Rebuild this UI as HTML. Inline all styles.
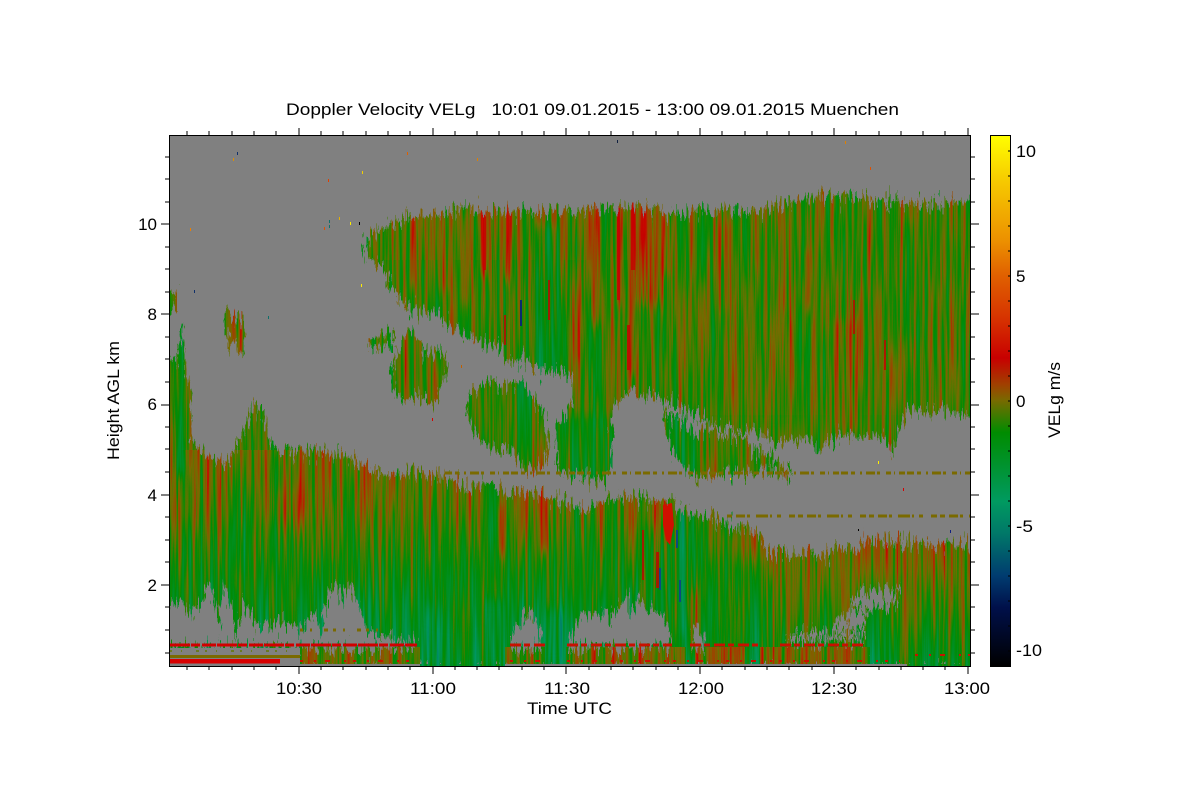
<!DOCTYPE html>
<html><head><meta charset="utf-8"><title>Doppler Velocity</title>
<style>html,body{margin:0;padding:0;background:#fff}svg{display:block}text{font-family:"Liberation Sans",sans-serif;font-size:17px;fill:#000}</style>
</head><body>
<svg xmlns="http://www.w3.org/2000/svg" width="1200" height="800" viewBox="0 0 1200 800">
<defs>
<linearGradient id="cb" x1="0" y1="135" x2="0" y2="666" gradientUnits="userSpaceOnUse">
<stop offset="0" stop-color="#ffff00"/><stop offset=".09" stop-color="#f6c800"/><stop offset=".2" stop-color="#ec9000"/><stop offset=".265" stop-color="#e06000"/><stop offset=".35" stop-color="#d63000"/><stop offset=".42" stop-color="#c80000"/><stop offset=".47" stop-color="#a04000"/><stop offset=".5" stop-color="#786a00"/><stop offset=".56" stop-color="#008c00"/><stop offset=".69" stop-color="#009a60"/><stop offset=".75" stop-color="#007868"/><stop offset=".83" stop-color="#003c70"/><stop offset=".89" stop-color="#00104a"/><stop offset="1" stop-color="#000000"/>
</linearGradient>
<linearGradient id="la" x1="0" y1="450" x2="0" y2="665" gradientUnits="userSpaceOnUse">
<stop offset="0" stop-color="#969696"/><stop offset=".23" stop-color="#8a8a8a"/><stop offset=".42" stop-color="#7d7d7d"/><stop offset=".6" stop-color="#727272"/><stop offset=".79" stop-color="#686868"/><stop offset="1" stop-color="#5e5e5e"/>
</linearGradient>
<linearGradient id="lb" x1="0" y1="530" x2="0" y2="665" gradientUnits="userSpaceOnUse">
<stop offset="0" stop-color="#9c9c9c"/><stop offset=".3" stop-color="#939393"/><stop offset=".52" stop-color="#888"/><stop offset=".75" stop-color="#7a7a7a"/><stop offset="1" stop-color="#6a6a6a"/>
</linearGradient>
<filter id="b3" x="-50%" y="-50%" width="200%" height="200%"><feGaussianBlur stdDeviation="2 6"/></filter>
<filter id="b8" x="-50%" y="-50%" width="200%" height="200%"><feGaussianBlur stdDeviation="7 12"/></filter>
<filter id="data" filterUnits="userSpaceOnUse" x="169" y="135" width="802" height="532" color-interpolation-filters="sRGB">
<feTurbulence type="fractalNoise" baseFrequency="0.28 0.007" numOctaves="3" seed="7" result="n"/>
<feColorMatrix in="n" type="matrix" values="1 0 0 0 0 1 0 0 0 0 1 0 0 0 0 0 0 0 0 1" result="nn"/>
<feComposite in="nn" in2="SourceGraphic" operator="arithmetic" k1="0" k2="0.62" k3="1" k4="-0.31" result="v"/>
<feComponentTransfer in="v">
<feFuncR type="table" tableValues="0 0 0 0 0 0 0 0 0 0 .15 .32 .47 .55 .63 .72 .78 .8 .82 .85 .87"/>
<feFuncG type="table" tableValues=".35 .4 .47 .54 .6 .585 .57 .56 .555 .55 .52 .47 .42 .33 .25 .12 0 .05 .1 .18 .24"/>
<feFuncB type="table" tableValues=".41 .41 .41 .4 .38 .31 .24 .16 .08 .02 0 0 0 0 0 0 0 0 0 0 0"/>
<feFuncA type="linear" slope="0" intercept="1"/>
</feComponentTransfer>
</filter>
<filter id="jag" filterUnits="userSpaceOnUse" x="140" y="110" width="860" height="580" color-interpolation-filters="sRGB">
<feTurbulence type="fractalNoise" baseFrequency="0.45 0.05" numOctaves="3" seed="3" result="n"/>
<feColorMatrix in="n" type="matrix" values="1 0 0 0 0 0 .3 0 0 .35 0 0 0 0 0 0 0 0 0 1" result="nn"/>
<feDisplacementMap in="SourceGraphic" in2="nn" scale="40" xChannelSelector="G" yChannelSelector="R"/>
</filter>
<mask id="m" maskUnits="userSpaceOnUse" x="169" y="135" width="802" height="532">
<rect x="169" y="135" width="802" height="532" fill="#000"/>
<g filter="url(#jag)">
<g fill="#fff">
<polygon points="373,233 403,220 430,213 460,209 520,211 560,211 600,209 640,208 660,213 700,212 750,211 770,210 775,207 790,202 820,196 850,196 880,200 910,204 940,203 975,202 975,415 947,413 940,407 930,413 910,410 900,427 892,455 883,437 873,437 860,437 847,435 827,442 817,450 807,437 777,443 753,430 720,428 700,418 680,408 660,398 640,395 627,393 617,403 610,413 612,425 575,425 573,377 560,372 537,373 530,370 527,357 507,363 500,350 480,343 460,333 447,323 437,313 420,312 403,303 393,290 380,267 368,257 362,247"/>
<polygon points="555,430 560,423 567,417 570,398 577,400 610,415 614,443 610,470 603,482 590,478 570,477 557,467"/>
<polygon points="467,410 470,390 480,390 493,377 497,387 510,385 522,382 533,397 540,407 547,430 550,453 540,467 523,470 513,450 497,450 487,447 473,430"/>
<polygon points="392,365 395,360 402,340 410,323 418,340 428,358 440,352 448,363 442,387 433,410 422,397 398,400 392,383"/>
<polygon points="369,340 385,333 395,338 395,345 380,348 369,348"/>
<polygon points="223,320 228,307 233,320 240,317 245,327 242,353 237,347 228,340"/>
<polygon points="165,290 176,290 176,310 165,312"/>
<polygon points="662,414 680,418 698,435 706,428 722,436 745,436 752,452 768,452 775,462 790,470 792,478 770,472 740,474 705,476 690,476 680,462 668,440"/>
<polygon points="165,358 177,360 180,342 183,325 185,367 188,380 193,413 190,440 198,445 208,457 228,462 237,443 248,423 253,402 258,413 265,413 268,437 278,453 312,452 338,453 365,465 382,473 405,472 445,478 465,486 493,485 507,493 537,493 567,503 590,508 600,503 617,498 643,497 657,503 673,497 683,512 710,517 733,525 763,532 763,555 800,554 830,555 833,548 852,550 870,539 903,542 937,545 975,542 975,670 165,670"/>
</g>
<g fill="#000">
<polygon points="165,610 177,602 183,600 190,615 203,603 207,583 215,603 220,633 223,587 233,610 235,643 243,600 257,627 280,620 300,630 313,613 320,630 333,583 343,603 348,582 357,600 367,630 387,637 393,640 417,642 417,648 165,648"/>
<polygon points="510,648 510,630 520,627 523,613 530,620 535,617 538,633 543,648"/>
<polygon points="567,648 573,633 582,613 593,612 610,617 620,610 627,595 630,610 635,612 638,593 645,612 648,607 663,613 672,648"/>
<polygon points="692,648 695,630 700,628 707,648"/>
<polygon points="787,641 790,633 865,633 865,641"/>
<polygon points="852,595 900,590 898,598 892,607 867,608 850,608"/>
<polygon points="837,617 867,612 865,627 835,630"/>
</g>
</g>
<rect x="169" y="648" width="131" height="18" fill="#000"/>
<rect x="169" y="664" width="802" height="3" fill="#000"/>
<rect x="420" y="664" width="85" height="3" fill="#fff"/>
<rect x="907" y="664" width="64" height="3" fill="#fff"/>
</mask>
</defs>
<rect width="1200" height="800" fill="#fff"/>
<rect x="169" y="135" width="801" height="531" fill="#808080"/>
<g mask="url(#m)">
<g filter="url(#data)">
<rect x="169" y="135" width="802" height="532" fill="#858585"/>
<rect x="169" y="450" width="595" height="216" fill="url(#la)"/>
<rect x="764" y="530" width="207" height="136" fill="url(#lb)"/>
<rect x="169" y="300" width="595" height="150" fill="#858585"/>
<rect x="660" y="200" width="310" height="215" fill="#878787"/>
<rect x="370" y="200" width="290" height="60" fill="#8b8b8b"/>
<g filter="url(#b3)">
<rect x="440" y="210" width="14" height="80" fill="#a2a2a2"/><rect x="480" y="205" width="6" height="70" fill="#bdbdbd"/><rect x="503" y="210" width="8" height="70" fill="#adadad"/><rect x="535" y="225" width="26" height="150" fill="#6e6e6e"/><rect x="590" y="215" width="10" height="110" fill="#a6a6a6"/><rect x="616" y="205" width="5" height="100" fill="#b8b8b8"/><rect x="630" y="205" width="6" height="170" fill="#bcbcbc"/><rect x="638" y="205" width="24" height="100" fill="#a6a6a6"/><rect x="660" y="215" width="12" height="60" fill="#a4a4a4"/>
<rect x="410" y="215" width="8" height="70" fill="#a0a0a0"/><rect x="462" y="215" width="6" height="90" fill="#a4a4a4"/><rect x="575" y="260" width="4" height="100" fill="#b0b0b0"/><rect x="716" y="220" width="20" height="90" fill="#939393"/><rect x="780" y="200" width="8" height="110" fill="#9c9c9c"/><rect x="805" y="250" width="6" height="60" fill="#a8a8a8"/><rect x="830" y="320" width="30" height="110" fill="#999"/><rect x="900" y="220" width="20" height="120" fill="#7a7a7a"/>
<rect x="392" y="335" width="30" height="70" fill="#8e8e8e"/><rect x="426" y="345" width="14" height="65" fill="#9a9a9a"/><rect x="223" y="305" width="24" height="50" fill="#919191"/>
<rect x="470" y="380" width="50" height="90" fill="#838383"/><rect x="518" y="378" width="14" height="95" fill="#656565"/><rect x="532" y="380" width="18" height="90" fill="#8b8b8b"/><rect x="555" y="415" width="60" height="70" fill="#6e6e6e"/>
<rect x="665" y="412" width="35" height="65" fill="#6a6a6a"/><rect x="700" y="430" width="95" height="50" fill="#8a8a8a"/>
<rect x="176" y="325" width="8" height="150" fill="#5c5c5c"/><rect x="169" y="360" width="7" height="120" fill="#9a9a9a"/>
<rect x="680" y="510" width="6" height="125" fill="#3f3f3f"/><rect x="668" y="600" width="12" height="50" fill="#777"/>
<rect x="425" y="600" width="20" height="66" fill="#454545"/><rect x="482" y="600" width="20" height="66" fill="#484848"/><rect x="545" y="610" width="20" height="56" fill="#4a4a4a"/>
<rect x="232" y="590" width="3" height="50" fill="#444"/><rect x="330" y="500" width="5" height="60" fill="#a0a0a0"/><rect x="498" y="505" width="6" height="50" fill="#a8a8a8"/><rect x="540" y="495" width="8" height="55" fill="#a6a6a6"/><rect x="690" y="590" width="8" height="60" fill="#999"/>
</g>
<g filter="url(#b8)">
<ellipse cx="290" cy="505" rx="18" ry="24" fill="#aaa"/><ellipse cx="750" cy="540" rx="30" ry="18" fill="#a4a4a4"/><ellipse cx="180" cy="510" rx="10" ry="18" fill="#a0a0a0"/><ellipse cx="640" cy="510" rx="24" ry="18" fill="#9e9e9e"/><ellipse cx="900" cy="555" rx="60" ry="12" fill="#a2a2a2"/><ellipse cx="450" cy="590" rx="35" ry="20" fill="#666"/>
</g>
<g fill="#989898">
<rect x="300" y="647" width="120" height="17"/><rect x="505" y="647" width="40" height="17"/><rect x="566" y="647" width="120" height="17"/><rect x="695" y="647" width="50" height="17"/><rect x="760" y="647" width="110" height="17"/>
</g>
</g>
<g fill="#c80000" opacity=".8">
<rect x="483" y="212" width="3" height="58"/><rect x="617" y="208" width="3" height="92"/><rect x="631" y="210" width="4" height="60"/><rect x="627" y="325" width="3" height="45"/><rect x="548" y="280" width="2" height="40"/>
<rect x="504" y="315" width="2" height="30"/><rect x="853" y="300" width="2" height="34"/><rect x="884" y="340" width="2" height="30"/><rect x="656" y="552" width="3" height="36"/><rect x="642" y="530" width="2" height="50"/>
</g>
<polygon points="663,505 672,503 674,525 670,545 666,540 663,525" fill="#d01000"/>
<rect x="520" y="300" width="2" height="26" fill="#0a2a70"/>
<rect x="676" y="530" width="2" height="18" fill="#0a4a80"/><rect x="659" y="568" width="2" height="22" fill="#0a4a80"/><rect x="679" y="580" width="2" height="22" fill="#0a4a80"/>
</g>
<g fill="none" stroke-width="3">
<path d="M445 473H970" stroke="#7a6a00" stroke-dasharray="7 3 4 5 2 4 9 2 3 6 5 3 1 4 6 2"/>
<path d="M727 516H970" stroke="#7a6a00" stroke-dasharray="5 4 9 2 3 6 12 2 2 5 4 8 6 3"/>
<path d="M170 645H417" stroke="#d00000" stroke-dasharray="20 1 9 2 14 1"/>
<path d="M510 645H545M567 645H672M690 645H760M780 645H865" stroke="#c81000" stroke-dasharray="11 3 6 4"/>
<path d="M300 661H417M510 661H545M567 661H900M915 655H970" stroke="#c81000" stroke-width="2" stroke-dasharray="3 11 2 9 5 14 2 7"/>
<path d="M300 630H385" stroke="#7a6a00" stroke-dasharray="3 7 2 12 4 5"/>
<path d="M170 651H300" stroke="#6a7a20" stroke-width="2" stroke-dasharray="2 9 1 14 3 6"/>
</g>
<rect x="170" y="655" width="130" height="3" fill="#7a6a00"/>
<rect x="170" y="659" width="110" height="4.500" fill="#d80000"/>
<g fill="#808080">
<rect x="169" y="664" width="251" height="2"/><rect x="505" y="664" width="402" height="2"/>
</g>
<g shape-rendering="crispEdges">
<rect x="237" y="152" width="1" height="3" fill="#10306a"/><rect x="233" y="158" width="1" height="3" fill="#e09000"/><rect x="328" y="179" width="1" height="3" fill="#e04000"/><rect x="362" y="171" width="1" height="3" fill="#f0d000"/><rect x="407" y="152" width="1" height="3" fill="#e06000"/><rect x="190" y="228" width="1" height="3" fill="#ee8000"/><rect x="324" y="227" width="1" height="3" fill="#e05000"/><rect x="339" y="217" width="1" height="3" fill="#e8b000"/><rect x="350" y="222" width="1" height="3" fill="#ffee00"/><rect x="359" y="222" width="1" height="3" fill="#000"/><rect x="329" y="220" width="1" height="3" fill="#10706a"/><rect x="329" y="225" width="1" height="3" fill="#10706a"/><rect x="617" y="140" width="1" height="3" fill="#102040"/><rect x="477" y="158" width="1" height="3" fill="#e08000"/><rect x="845" y="141" width="1" height="3" fill="#e08000"/><rect x="870" y="167" width="1" height="3" fill="#e05000"/><rect x="878" y="461" width="1" height="3" fill="#ffee00"/><rect x="361" y="284" width="1" height="3" fill="#ffee00"/><rect x="268" y="316" width="1" height="3" fill="#10706a"/><rect x="194" y="290" width="1" height="3" fill="#10306a"/><rect x="461" y="365" width="1" height="3" fill="#c06000"/><rect x="432" y="418" width="1" height="3" fill="#d80000"/><rect x="950" y="530" width="1" height="3" fill="#102080"/><rect x="858" y="529" width="1" height="2" fill="#000"/><rect x="730" y="478" width="1" height="2" fill="#ffcc00"/><rect x="903" y="488" width="1" height="3" fill="#d80000"/>
</g>
<rect x="169.500" y="135.500" width="801" height="531" fill="none" stroke="#000" shape-rendering="crispEdges"/>
<g fill="none" stroke="#000" stroke-width="1" shape-rendering="crispEdges">
<path d="M187 135V131M209 135V131M232 135V131M254 135V131M276 135V131M299 135V128M321 135V131M343 135V131M366 135V131M388 135V131M410 135V131M433 135V128M455 135V131M477 135V131M499 135V131M522 135V131M544 135V131M566 135V128M589 135V131M611 135V131M633 135V131M656 135V131M678 135V131M700 135V128M722 135V131M745 135V131M767 135V131M789 135V131M812 135V131M834 135V128M856 135V131M879 135V131M901 135V131M923 135V131M945 135V131M968 135V128"/>
<path d="M187 667V670M209 667V670M232 667V670M254 667V670M276 667V670M299 667V674M321 667V670M343 667V670M366 667V670M388 667V670M410 667V670M433 667V674M455 667V670M477 667V670M499 667V670M522 667V670M544 667V670M566 667V674M589 667V670M611 667V670M633 667V670M656 667V670M678 667V670M700 667V674M722 667V670M745 667V670M767 667V670M789 667V670M812 667V670M834 667V674M856 667V670M879 667V670M901 667V670M923 667V670M945 667V670M968 667V674"/>
<path d="M169 157H165M169 179H165M169 202H165M169 224H161M169 247H165M169 269H165M169 292H165M169 314H161M169 337H165M169 359H165M169 382H165M169 405H161M169 427H165M169 449H165M169 472H165M169 495H161M169 517H165M169 540H165M169 562H165M169 585H161M169 607H165M169 630H165M169 653H165"/>
<path d="M971 157H975M971 179H975M971 202H975M971 224H979M971 247H975M971 269H975M971 292H975M971 314H979M971 337H975M971 359H975M971 382H975M971 405H979M971 427H975M971 449H975M971 472H975M971 495H979M971 517H975M971 540H975M971 562H975M971 585H979M971 607H975M971 630H975M971 653H975"/>
</g>
<rect x="990" y="135" width="21" height="532" fill="url(#cb)"/>
<rect x="990.500" y="135.500" width="20" height="531" fill="none" stroke="#000" shape-rendering="crispEdges"/>
<path d="M1008 151H1010M1008 176H1010M1008 201H1010M1008 226H1010M1008 251H1010M1008 276H1010M1008 301H1010M1008 326H1010M1008 351H1010M1008 376H1010M1008 401H1010M1008 426H1010M1008 451H1010M1008 476H1010M1008 501H1010M1008 526H1010M1008 551H1010M1008 576H1010M1008 601H1010M1008 626H1010M1008 651H1010" stroke="#000" fill="none" shape-rendering="crispEdges"/>
<text x="286" y="115" textLength="613" lengthAdjust="spacingAndGlyphs" style="white-space:pre" xml:space="preserve">Doppler Velocity VELg   10:01 09.01.2015 - 13:00 09.01.2015 Muenchen</text>
<text x="276" y="694" textLength="46" lengthAdjust="spacingAndGlyphs">10:30</text>
<text x="410" y="694" textLength="46" lengthAdjust="spacingAndGlyphs">11:00</text>
<text x="544" y="694" textLength="46" lengthAdjust="spacingAndGlyphs">11:30</text>
<text x="678" y="694" textLength="46" lengthAdjust="spacingAndGlyphs">12:00</text>
<text x="811" y="694" textLength="46" lengthAdjust="spacingAndGlyphs">12:30</text>
<text x="944" y="694" textLength="46" lengthAdjust="spacingAndGlyphs">13:00</text>
<text x="527" y="714" textLength="85" lengthAdjust="spacingAndGlyphs">Time UTC</text>
<text x="157" y="230" text-anchor="end">10</text>
<text x="157" y="320" text-anchor="end">8</text>
<text x="157" y="410" text-anchor="end">6</text>
<text x="157" y="501" text-anchor="end">4</text>
<text x="157" y="591" text-anchor="end">2</text>
<text x="119" y="460" transform="rotate(-90 119 460)" textLength="119" lengthAdjust="spacingAndGlyphs">Height AGL km</text>
<text x="1060" y="438" transform="rotate(-90 1060 438)" textLength="76" lengthAdjust="spacingAndGlyphs">VELg m/s</text>
<text x="1016" y="157" textLength="20" lengthAdjust="spacingAndGlyphs">10</text>
<text x="1016" y="282">5</text>
<text x="1016" y="407">0</text>
<text x="1016" y="532" textLength="17" lengthAdjust="spacingAndGlyphs">-5</text>
<text x="1016" y="656" textLength="26" lengthAdjust="spacingAndGlyphs">-10</text>
</svg>
</body></html>
